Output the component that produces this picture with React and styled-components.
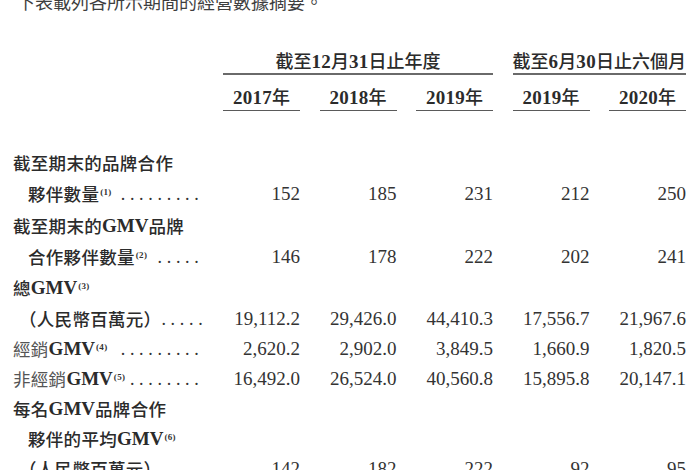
import React from 'react';
import styled, { createGlobalStyle } from 'styled-components';

const GlobalStyle = createGlobalStyle`
  html, body {
    margin: 0;
    padding: 0;
    background: #ffffff;
  }
  body {
    width: 700px;
    height: 470px;
    overflow: hidden;
    font-family: "Liberation Serif", "Noto Sans CJK TC", serif;
    color: #2b2b2b;
  }
`;

const Page = styled.div`
  width: 700px;
`;

const Intro = styled.p`
  margin: -10px 0 0 17px;
  font-family: "Noto Sans CJK TC", sans-serif;
  font-size: 18px;
  line-height: 22px;
  color: #3e3e3e;
  white-space: nowrap;
`;

const Grid = styled.div`
  display: grid;
  grid-template-columns: 203.5px repeat(5, 77px);
  column-gap: 19.5px;
  align-items: end;
  margin-top: ${(p) => p.$top}px;
`;

const GroupHead = styled.div`
  grid-column: ${(p) => p.$col} / span ${(p) => p.$span};
  text-align: center;
  font-family: "Liberation Serif", "Noto Sans CJK TC", serif;
  font-size: 18px;
  font-weight: 500;
  line-height: 20px;
  white-space: nowrap;
  padding-bottom: 1px;
  border-bottom: 2px solid #6a6a6a;
`;

const Year = styled.div`
  grid-column: ${(p) => p.$col};
  text-align: center;
  font-size: 18px;
  font-weight: 500;
  line-height: 20px;
  padding-bottom: 2px;
  border-bottom: 1.5px solid #5a5a5a;
`;

const Digits = styled.b`
  font-family: "Liberation Serif", serif;
  font-size: 19px;
  font-weight: 700;
  letter-spacing: 0.3px;
`;

const Row = styled.div`
  display: grid;
  grid-template-columns: 203.5px repeat(5, 77px);
  column-gap: 19.5px;
  align-items: center;
  height: ${(p) => (p.$tall ? 31.67 : 30.14)}px;
`;

const Body = styled.div`
  margin-top: 35.7px;
`;

const Label = styled.div`
  display: flex;
  align-items: center;
  min-width: 0;
  padding-left: ${(p) => p.$indent}px;
  font-family: "Noto Sans CJK TC", sans-serif;
  font-size: 17.5px;
  font-weight: ${(p) => (p.$light ? 400 : 500)};
  color: ${(p) => (p.$light ? '#555' : '#2b2b2b')};
  letter-spacing: 0.3px;
  white-space: nowrap;
  line-height: 22px;
`;

const Latin = styled.span`
  font-family: "Liberation Serif", serif;
  font-size: 19px;
  font-weight: 700;
  color: #2b2b2b;
  letter-spacing: 0;
`;

const Sup = styled.sup`
  font-family: "Liberation Serif", serif;
  font-size: 9px;
  font-weight: 700;
  line-height: 0;
  position: relative;
  top: -2px;
  margin-left: 1px;
  color: #333;
`;

const Leader = styled.span`
  margin-left: auto;
  font-family: "Liberation Serif", serif;
  font-size: 18px;
  letter-spacing: 4.7px;
  color: #333;
`;

const Num = styled.div`
  text-align: right;
  font-family: "Liberation Serif", serif;
  font-size: 19px;
  color: #333;
  white-space: nowrap;
`;

const rows = [
  { tall: true, indent: 13, label: <>截至期末的品牌合作</> },
  {
    tall: true,
    indent: 28,
    label: <>夥伴數量<Sup>(1)</Sup></>,
    dots: 9,
    nums: ['152', '185', '231', '212', '250'],
  },
  { tall: true, indent: 13, label: <>截至期末的<Latin>GMV</Latin>品牌</> },
  {
    tall: true,
    indent: 28,
    label: <>合作夥伴數量<Sup>(2)</Sup></>,
    dots: 5,
    nums: ['146', '178', '222', '202', '241'],
  },
  { indent: 13, label: <>總<Latin>GMV</Latin><Sup>(3)</Sup></> },
  {
    indent: 19,
    label: <>（人民幣百萬元）</>,
    dots: 5,
    nums: ['19,112.2', '29,426.0', '44,410.3', '17,556.7', '21,967.6'],
  },
  {
    indent: 13,
    light: true,
    label: <>經銷<Latin>GMV</Latin><Sup>(4)</Sup></>,
    dots: 9,
    nums: ['2,620.2', '2,902.0', '3,849.5', '1,660.9', '1,820.5'],
  },
  {
    indent: 13,
    light: true,
    label: <>非經銷<Latin>GMV</Latin><Sup>(5)</Sup></>,
    dots: 8,
    nums: ['16,492.0', '26,524.0', '40,560.8', '15,895.8', '20,147.1'],
  },
  { indent: 13, label: <>每名<Latin>GMV</Latin>品牌合作</> },
  { indent: 28, label: <>夥伴的平均<Latin>GMV</Latin><Sup>(6)</Sup></> },
  {
    indent: 19,
    label: <>（人民幣百萬元）</>,
    dots: 5,
    nums: ['142', '182', '222', '92', '95'],
  },
];

const years = ['2017', '2018', '2019', '2019', '2020'];

const App = () => {
  return (
    <Page>
      <GlobalStyle />
      <Intro>下表載列各所示期間的經營數據摘要。</Intro>

      <Grid $top={40}>
        <GroupHead $col={2} $span={3}>
          截至<Digits>12</Digits>月<Digits>31</Digits>日止年度
        </GroupHead>
        <GroupHead $col={5} $span={2}>
          截至<Digits>6</Digits>月<Digits>30</Digits>日止六個月
        </GroupHead>
      </Grid>

      <Grid $top={13}>
        {years.map((y, i) => (
          <Year key={i} $col={i + 2}>
            <Digits>{y}</Digits>年
          </Year>
        ))}
      </Grid>

      <Body>
        {rows.map((r, i) => (
          <Row key={i} $tall={r.tall}>
            <Label $indent={r.indent} $light={r.light}>
              {r.label}
              {r.dots && <Leader>{'.'.repeat(r.dots)}</Leader>}
            </Label>
            {r.nums && r.nums.map((n, j) => <Num key={j}>{n}</Num>)}
          </Row>
        ))}
      </Body>
    </Page>
  );
};

export default App;
